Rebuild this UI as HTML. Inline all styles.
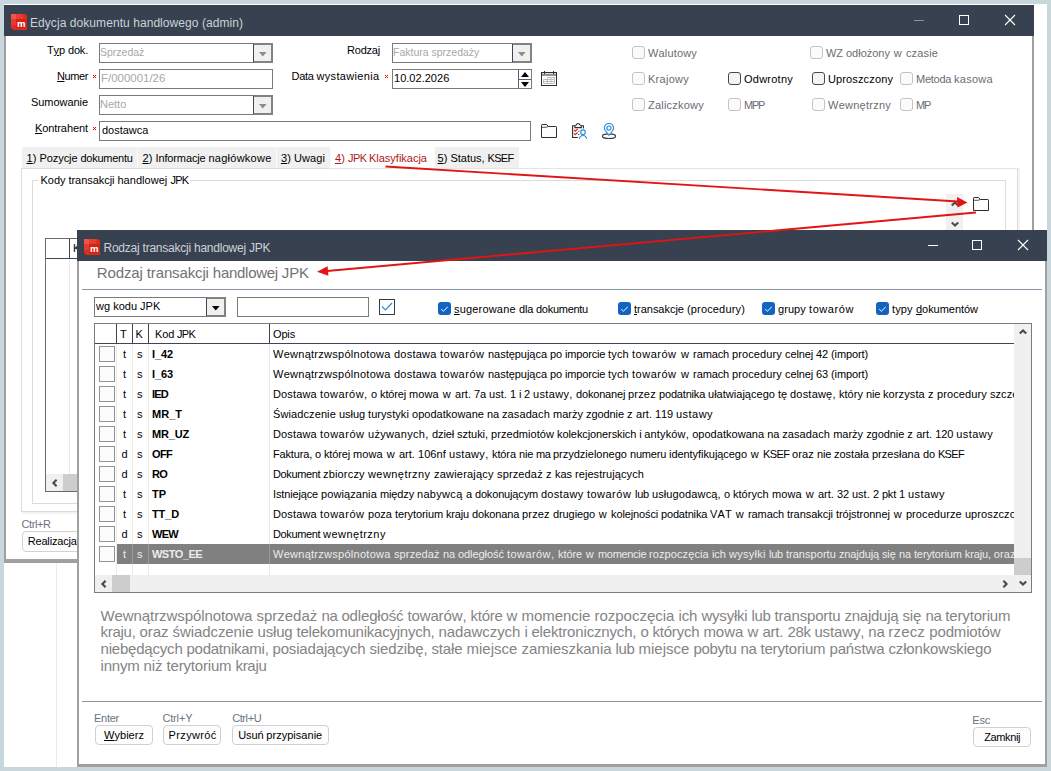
<!DOCTYPE html>
<html lang="pl"><head><meta charset="utf-8"><title>Rodzaj transakcji handlowej JPK</title>
<style>
html,body{margin:0;padding:0;}
body{width:1051px;height:771px;overflow:hidden;background:#c8d7dc;position:relative;font-family:"Liberation Sans",sans-serif;}
div{position:absolute;}
.t{position:absolute;white-space:pre;line-height:1;font-kerning:none;font-variant-ligatures:none;}
.thin{}
u{text-decoration:underline;text-underline-offset:1px;}
</style></head><body>
<div style="left:4px;top:4px;width:1043px;height:763px;background:#fff;"></div>
<div style="left:56px;top:563px;width:1px;height:204px;background:#ecebe4;"></div>
<div style="left:4px;top:36px;width:1030px;height:527px;background:#fff;box-sizing:border-box;border-left:2px solid #a0a0a0;border-right:2px solid #a0a0a0;border-bottom:4px solid #a0a0a0;"></div>
<div style="left:4px;top:5px;width:1030px;height:31px;background:#37414f;"></div>
<svg width="16" height="16" viewBox="0 0 16 16" style="position:absolute;left:11px;top:14px"><path d="M0 0H14L16 2V16H2.5L0 13.5Z" fill="#df2a1b"/><path d="M0 0H5V5H0Z" fill="#f1534a"/><path d="M5 0H12V5H5Z" fill="#e63d30"/><path d="M12 0H14L16 2V5H12Z" fill="#de2c1e"/><path d="M0 5H5V11H0Z" fill="#e53c30"/><path d="M0 11H5V16H2.5L0 13.5Z" fill="#de2c1e"/><rect x="5" y="5" width="11" height="9.5" fill="#d32315"/><text x="6.1" y="13" font-family="Liberation Sans, sans-serif" font-weight="bold" font-size="9.6" fill="#fff">m</text></svg>
<span id="t1" class="t " style="top:16.5px;font-size:12px;color:#ccd2d9;left:30px;letter-spacing:0.065px;">Edycja dokumentu handlowego (admin)</span>
<div style="left:914px;top:20px;width:10px;height:1px;background:#8d949e;"></div>
<div style="left:959px;top:15px;width:10px;height:10px;box-sizing:border-box;border:1px solid #fff;"></div>
<svg width="12" height="12" viewBox="0 0 12 12" style="position:absolute;left:1004px;top:14px"><path d="M1 1L11 11M11 1L1 11" stroke="#fff" stroke-width="1.1" fill="none"/></svg>
<span class="t " style="top:45.25px;font-size:11px;color:#000;right:963px;"><span style="letter-spacing:-.1px">T<u>y</u>p </span><span style="letter-spacing:-.2px">dok.</span></span>
<span class="t " style="top:71.25px;font-size:11px;color:#000;right:963px;"><span style="letter-spacing:-.4px"><u>N</u>umer</span></span>
<span class="t " style="top:97.25px;font-size:11px;color:#000;right:963px;"><span style="letter-spacing:-.05px">Sumowanie</span></span>
<span class="t " style="top:123.25px;font-size:11px;color:#000;right:963px;"><span style="letter-spacing:-.08px"><u>K</u>ontrahent</span></span>
<span class="t " style="top:45.25px;font-size:11px;color:#000;right:671px;"><span style="letter-spacing:-.21px">Rodzaj</span></span>
<span class="t " style="top:71.25px;font-size:11px;color:#000;right:671.5px;"><span style="letter-spacing:-.26px">Data </span><span style="letter-spacing:.34px">wystawienia</span></span>
<svg width="3" height="3" viewBox="0 0 3 3" shape-rendering="crispEdges" style="position:absolute;left:93px;top:75px"><path d="M0 0h1v1h-1zM2 0h1v1h-1zM1 1h1v1h-1zM0 2h1v1h-1zM2 2h1v1h-1z" fill="#f00"/></svg>
<svg width="3" height="3" viewBox="0 0 3 3" shape-rendering="crispEdges" style="position:absolute;left:93px;top:127px"><path d="M0 0h1v1h-1zM2 0h1v1h-1zM1 1h1v1h-1zM0 2h1v1h-1zM2 2h1v1h-1z" fill="#f00"/></svg>
<svg width="3" height="3" viewBox="0 0 3 3" shape-rendering="crispEdges" style="position:absolute;left:385px;top:75px"><path d="M0 0h1v1h-1zM2 0h1v1h-1zM1 1h1v1h-1zM0 2h1v1h-1zM2 2h1v1h-1z" fill="#f00"/></svg>
<div style="left:99px;top:43px;width:174px;height:20px;box-sizing:border-box;border:1px solid #7a7a7a;background:#fff;"></div>
<div style="left:253px;top:43px;width:20px;height:20px;box-sizing:border-box;border:2px solid #828282;border-left:1px solid #3c4656;background:#f0f0f0;"></div>
<svg width="8" height="5" viewBox="0 0 8 5" style="position:absolute;left:258.7px;top:51.8px"><path d="M0 0H7.6L3.8 4.4Z" fill="#8c8c8c"/></svg>
<span id="t8" class="t thin" style="top:47.25px;font-size:11.4px;color:#a8a8a8;left:100.4px;transform:scaleX(0.9205);transform-origin:0 0;">Sprzedaż</span>
<div style="left:99px;top:69px;width:174px;height:20px;box-sizing:border-box;border:1px solid #7a7a7a;background:#fff;"></div>
<span id="t9" class="t thin" style="top:73.25px;font-size:11.4px;color:#a8a8a8;left:101.4px;transform:scaleX(1.0052);transform-origin:0 0;">F/000001/26</span>
<div style="left:99px;top:95px;width:174px;height:20px;box-sizing:border-box;border:1px solid #7a7a7a;background:#fff;"></div>
<div style="left:253px;top:95px;width:20px;height:20px;box-sizing:border-box;border:2px solid #828282;border-left:1px solid #3c4656;background:#f0f0f0;"></div>
<svg width="8" height="5" viewBox="0 0 8 5" style="position:absolute;left:258.7px;top:103.8px"><path d="M0 0H7.6L3.8 4.4Z" fill="#8c8c8c"/></svg>
<span id="t10" class="t thin" style="top:99.25px;font-size:11.4px;color:#a8a8a8;left:100.4px;transform:scaleX(0.9657);transform-origin:0 0;">Netto</span>
<div style="left:99px;top:121px;width:432px;height:20px;box-sizing:border-box;border:1px solid #7a7a7a;background:#fff;"></div>
<span id="t11" class="t thin" style="top:125.25px;font-size:11.4px;color:#000;left:102.3px;transform:scaleX(0.9621);transform-origin:0 0;">dostawca</span>
<div style="left:392px;top:43px;width:140px;height:20px;box-sizing:border-box;border:1px solid #7a7a7a;background:#fff;"></div>
<div style="left:512px;top:43px;width:20px;height:20px;box-sizing:border-box;border:2px solid #828282;border-left:1px solid #3c4656;background:#f0f0f0;"></div>
<svg width="8" height="5" viewBox="0 0 8 5" style="position:absolute;left:517.7px;top:51.8px"><path d="M0 0H7.6L3.8 4.4Z" fill="#8c8c8c"/></svg>
<span id="t12" class="t thin" style="top:47.25px;font-size:11.4px;color:#a8a8a8;left:393.4px;transform:scaleX(0.921);transform-origin:0 0;">Faktura sprzedaży</span>
<div style="left:392px;top:69px;width:140px;height:20px;box-sizing:border-box;border:1px solid #7a7a7a;background:#fff;"></div>
<span id="t13" class="t thin" style="top:73.25px;font-size:11.4px;color:#000;left:394.2px;transform:scaleX(0.9699);transform-origin:0 0;">10.02.2026</span>
<div style="left:518px;top:70px;width:13px;height:18px;box-sizing:border-box;background:#fff;border-left:1px solid #555f70;"></div>
<div style="left:518px;top:79px;width:13px;height:1px;background:#555f70;"></div>
<svg width="8" height="5" viewBox="0 0 8 5" style="position:absolute;left:521px;top:72px"><path d="M0 5H8L4 0Z" fill="#000"/></svg>
<svg width="8" height="5" viewBox="0 0 8 5" style="position:absolute;left:521px;top:82px"><path d="M0 0H8L4 5Z" fill="#000"/></svg>
<svg width="17" height="16" viewBox="0 0 17 16" style="position:absolute;left:541px;top:71px"><rect x="0.5" y="1.5" width="15" height="13" fill="#fff" stroke="#2e2e2e" stroke-width="1"/><rect x="1" y="2" width="14" height="1.5" fill="#dedad2"/><path d="M1 4H15" stroke="#2e2e2e" stroke-width="1"/><path d="M3.5 0V3M12.5 0V3" stroke="#2e2e2e" stroke-width="1"/><path d="M2.5 8.5H13.5M2.5 10.5H13.5M2.5 12.5H13.5M2.5 8.5V12.5M6.5 6.5V12.5M10 6.5V12.5M13.5 6.5V12.5M6.5 6.5H13.5" stroke="#bcbcbc" stroke-width="1" fill="none"/></svg>
<svg width="16" height="14" viewBox="0 0 16 14" style="position:absolute;left:541px;top:124px"><path d="M0.5 13.5V1.2Q0.5 0.5 1.2 0.5H5.6L7.2 2.5H14.8Q15.5 2.5 15.5 3.2V13.5Z" fill="#fdfdfd" stroke="#2d2d2d" stroke-width="1" stroke-linejoin="round"/><path d="M0.5 3.3H5.2L7.2 2.5" fill="none" stroke="#2d2d2d" stroke-width="0.8"/></svg>
<svg width="16" height="17" viewBox="0 0 16 17" style="position:absolute;left:572px;top:123px"><path d="M5.8 14.5H0.6V2.7H11.4V5.6" fill="#fff" stroke="#2e2e2e" stroke-width="1.1"/><path d="M2.9 2.7V4.6H9.3V2.7M3.6 2.7Q6.1 -1.6 8.6 2.7" fill="#fff" stroke="#2e2e2e" stroke-width="1.1"/><path d="M2.1 6.9L3.3 8.2L5.6 6M2.1 10.4L3.3 11.7L5.6 9.5" fill="none" stroke="#e62626" stroke-width="1.25"/><path d="M6.2 8.3h1.1M6.2 11.5h1.1" stroke="#2e2e2e" stroke-width="1.1"/><circle cx="11" cy="9.2" r="2.3" fill="#fff" stroke="#2a8fd8" stroke-width="1.15"/><path d="M7.2 15.9Q8 12.5 11 12.5Q14 12.5 14.8 15.9" fill="none" stroke="#2a8fd8" stroke-width="1.15"/></svg>
<svg width="16" height="17" viewBox="0 0 16 17" style="position:absolute;left:601px;top:123px"><ellipse cx="8" cy="13.2" rx="6.6" ry="2.3" fill="none" stroke="#3c3c3c" stroke-width="1.15"/><path d="M8 12.4L4.3 7.5Q3.1 5.7 3.5 4.2Q4.4 0.5 8 0.5Q11.6 0.5 12.5 4.2Q12.9 5.7 11.7 7.5Z" fill="#fff" stroke="#2a8fd8" stroke-width="1.15"/><circle cx="8" cy="5.1" r="2.1" fill="#fff" stroke="#2a8fd8" stroke-width="1.2"/></svg>
<div style="left:632px;top:46px;width:13px;height:13px;box-sizing:border-box;border:1px solid #c4c4c4;border-radius:3px;background:#fbfbfb;"></div>
<span class="t " style="top:48.0px;font-size:11px;color:#6c6c72;left:648px;"><span style="letter-spacing:.16px">Walutowy</span></span>
<div style="left:632px;top:72px;width:13px;height:13px;box-sizing:border-box;border:1px solid #c4c4c4;border-radius:3px;background:#fbfbfb;"></div>
<span class="t " style="top:74.0px;font-size:11px;color:#6c6c72;left:648px;"><span style="letter-spacing:.27px">Krajowy</span></span>
<div style="left:632px;top:98px;width:13px;height:13px;box-sizing:border-box;border:1px solid #c4c4c4;border-radius:3px;background:#fbfbfb;"></div>
<span class="t " style="top:100.0px;font-size:11px;color:#6c6c72;left:648px;"><span style="letter-spacing:.22px">Zaliczkowy</span></span>
<div style="left:728px;top:72px;width:13px;height:13px;box-sizing:border-box;border:1px solid #484848;border-radius:3px;background:#f4f4f4;"></div>
<span class="t " style="top:74.0px;font-size:11px;color:#000;left:744px;"><span style="letter-spacing:.24px">Odwrotny</span></span>
<div style="left:728px;top:98px;width:13px;height:13px;box-sizing:border-box;border:1px solid #c4c4c4;border-radius:3px;background:#fbfbfb;"></div>
<span class="t " style="top:100.0px;font-size:11px;color:#6c6c72;left:744px;"><span style="letter-spacing:-1.28px">MPP</span></span>
<div style="left:810px;top:46px;width:13px;height:13px;box-sizing:border-box;border:1px solid #c4c4c4;border-radius:3px;background:#fbfbfb;"></div>
<span class="t " style="top:48.0px;font-size:11px;color:#6c6c72;left:826px;"><span style="letter-spacing:-.06px">WZ </span><span style="letter-spacing:-.01px">odłożony </span><span style="letter-spacing:.6px;margin-left:0.8px">w </span><span style="letter-spacing:.14px">czasie</span></span>
<div style="left:812px;top:72px;width:13px;height:13px;box-sizing:border-box;border:1px solid #484848;border-radius:3px;background:#f4f4f4;"></div>
<span class="t " style="top:74.0px;font-size:11px;color:#000;left:828px;"><span style="letter-spacing:.13px">Uproszczony</span></span>
<div style="left:812px;top:98px;width:13px;height:13px;box-sizing:border-box;border:1px solid #c4c4c4;border-radius:3px;background:#fbfbfb;"></div>
<span class="t " style="top:100.0px;font-size:11px;color:#6c6c72;left:828px;"><span style="letter-spacing:.25px">Wewnętrzny</span></span>
<div style="left:900px;top:72px;width:13px;height:13px;box-sizing:border-box;border:1px solid #c4c4c4;border-radius:3px;background:#fbfbfb;"></div>
<span class="t " style="top:74.0px;font-size:11px;color:#6c6c72;left:916px;"><span style="letter-spacing:-.25px">Metoda </span><span style="letter-spacing:.28px">kasowa</span></span>
<div style="left:900px;top:98px;width:13px;height:13px;box-sizing:border-box;border:1px solid #c4c4c4;border-radius:3px;background:#fbfbfb;"></div>
<span class="t " style="top:100.0px;font-size:11px;color:#6c6c72;left:916px;"><span style="letter-spacing:-1.25px">MP</span></span>
<div style="left:22px;top:147px;width:497px;height:21px;background:#f0f0f0;"></div>
<div style="left:330px;top:147px;width:104px;height:22px;background:#fff;"></div>
<div style="left:137px;top:148px;width:1px;height:20px;background:#fcfcfc;"></div>
<div style="left:276px;top:148px;width:1px;height:20px;background:#fcfcfc;"></div>
<div style="left:330px;top:148px;width:1px;height:20px;background:#fcfcfc;"></div>
<div style="left:434px;top:148px;width:1px;height:20px;background:#fcfcfc;"></div>
<span class="t " style="top:152.75px;font-size:11px;color:#000;left:26.5px;"><span style="letter-spacing:.05px"><u>1</u>) </span><span style="letter-spacing:-.07px">Pozycje </span><span style="letter-spacing:-.27px">dokumentu</span></span>
<span class="t " style="top:152.75px;font-size:11px;color:#000;left:142.5px;"><span style="letter-spacing:.05px"><u>2</u>) </span><span style="letter-spacing:-.13px">Informacje </span><span style="letter-spacing:.25px">nagłówkowe</span></span>
<span class="t " style="top:152.75px;font-size:11px;color:#000;left:281px;"><span style="letter-spacing:.05px"><u>3</u>) </span><span style="letter-spacing:.08px">Uwagi</span></span>
<span class="t " style="top:152.75px;font-size:11px;color:#b01818;left:335px;"><span style="letter-spacing:.05px"><u>4</u>) </span><span style="letter-spacing:-.56px">JPK </span><span style="letter-spacing:-.01px">Klasyfikacja</span></span>
<span class="t " style="top:152.75px;font-size:11px;color:#000;left:437.5px;"><span style="letter-spacing:.05px"><u>5</u>) </span><span style="letter-spacing:-.04px">Status, </span><span style="letter-spacing:-.68px">KSEF</span></span>
<div style="left:21px;top:168px;width:997px;height:344px;box-sizing:border-box;border:1px solid #dcdcdc;border-top-color:#e4e4e4;"></div>
<div style="left:22px;top:512px;width:998px;height:2px;background:#f3f3f3;"></div>
<div style="left:22px;top:168px;width:308px;height:1px;background:#dcdcdc;"></div>
<div style="left:1018px;top:168px;width:2px;height:345px;background:#f3f3f3;"></div>
<div style="left:32px;top:180px;width:974px;height:324px;box-sizing:border-box;border:1px solid #dcdcdc;"></div>
<div style="left:38px;top:176px;width:152px;height:10px;background:#fff;"></div>
<span class="t " style="top:174.75px;font-size:11px;color:#000;left:40.5px;"><span style="letter-spacing:-.03px">Kody </span><span style="letter-spacing:-.05px">transakcji </span><span style="letter-spacing:.04px">handlowej </span><span style="letter-spacing:-.73px">JPK</span></span>
<div style="left:45px;top:238px;width:600px;height:254px;box-sizing:border-box;border:1px solid #6a6a6a;background:#fff;"></div>
<div style="left:46px;top:258px;width:598px;height:1px;background:#3c4656;"></div>
<div style="left:69px;top:239px;width:1px;height:19px;background:#3c4656;"></div>
<div style="left:69px;top:259px;width:1px;height:215px;background:#ecebe4;"></div>
<span class="t " style="top:242.75px;font-size:11px;color:#000;left:73px;"><span style="letter-spacing:-.19px">Kod</span></span>
<div style="left:46px;top:474px;width:598px;height:17px;background:#f0f0f0;"></div>
<div style="left:63px;top:474px;width:30px;height:17px;background:#cdcdcd;"></div>
<svg width="7" height="8" viewBox="0 0 7 8" style="position:absolute;left:50.5px;top:478.5px"><path d="M5.6 0.8L2.4 4L5.6 7.2" fill="none" stroke="#4a4a4a" stroke-width="2.1"/></svg>
<div style="left:946px;top:194px;width:17px;height:40px;background:#f0f0f0;"></div>
<svg width="8" height="7" viewBox="0 0 8 7" style="position:absolute;left:950.5px;top:199.5px"><path d="M0.8 5.6L4 2.4L7.2 5.6" fill="none" stroke="#4a4a4a" stroke-width="2.1"/></svg>
<svg width="8" height="7" viewBox="0 0 8 7" style="position:absolute;left:950.5px;top:220.5px"><path d="M0.8 1.4L4 4.6L7.2 1.4" fill="none" stroke="#4a4a4a" stroke-width="2.1"/></svg>
<svg width="16" height="14" viewBox="0 0 16 14" style="position:absolute;left:973px;top:197px"><path d="M0.5 13.5V1.2Q0.5 0.5 1.2 0.5H5.6L7.2 2.5H14.8Q15.5 2.5 15.5 3.2V13.5Z" fill="#fdfdfd" stroke="#2d2d2d" stroke-width="1" stroke-linejoin="round"/><path d="M0.5 3.3H5.2L7.2 2.5" fill="none" stroke="#2d2d2d" stroke-width="0.8"/></svg>
<span class="t " style="top:518.5px;font-size:11px;color:#6a7480;left:21.5px;"><span style="letter-spacing:-.41px">Ctrl+R</span></span>
<div style="left:22px;top:531px;width:80px;height:21px;box-sizing:border-box;border:1px solid #d2d2d2;border-radius:4px;background:#fdfdfd;"></div>
<span class="t " style="top:536.25px;font-size:11px;color:#000;left:27.7px;"><span style="letter-spacing:-.17px">Realizacja</span></span>
<div style="left:77px;top:260px;width:970px;height:507px;background:#fff;box-sizing:border-box;border-left:2px solid #a0a0a0;border-right:2px solid #a0a0a0;border-bottom:3px solid #a0a0a0;"></div>
<div style="left:77px;top:230px;width:970px;height:31px;background:#37414f;"></div>
<svg width="16" height="16" viewBox="0 0 16 16" style="position:absolute;left:84px;top:239px"><path d="M0 0H14L16 2V16H2.5L0 13.5Z" fill="#df2a1b"/><path d="M0 0H5V5H0Z" fill="#f1534a"/><path d="M5 0H12V5H5Z" fill="#e63d30"/><path d="M12 0H14L16 2V5H12Z" fill="#de2c1e"/><path d="M0 5H5V11H0Z" fill="#e53c30"/><path d="M0 11H5V16H2.5L0 13.5Z" fill="#de2c1e"/><rect x="5" y="5" width="11" height="9.5" fill="#d32315"/><text x="6.1" y="13" font-family="Liberation Sans, sans-serif" font-weight="bold" font-size="9.6" fill="#fff">m</text></svg>
<span id="t33" class="t " style="top:241.5px;font-size:12px;color:#ccd2d9;left:103.5px;letter-spacing:-0.236px;">Rodzaj transakcji handlowej JPK</span>
<div style="left:927.5px;top:245px;width:10px;height:1px;background:#fff;"></div>
<div style="left:972px;top:240px;width:10px;height:10px;box-sizing:border-box;border:1px solid #fff;"></div>
<svg width="12" height="12" viewBox="0 0 12 12" style="position:absolute;left:1017px;top:239px"><path d="M1 1L11 11M11 1L1 11" stroke="#fff" stroke-width="1.1" fill="none"/></svg>
<span class="t " style="top:265.25px;font-size:15px;color:#727272;left:96.8px;"><span style="letter-spacing:-.12px">Rodzaj </span><span style="letter-spacing:-.14px">transakcji </span><span style="letter-spacing:-.27px">handlowej </span><span style="letter-spacing:-.17px">JPK</span></span>
<div style="left:82px;top:289px;width:960px;height:1px;background:#8a94a2;"></div>
<div style="left:94px;top:297px;width:132px;height:20px;box-sizing:border-box;border:1px solid #7a7a7a;background:#fff;"></div>
<div style="left:206px;top:297px;width:20px;height:20px;box-sizing:border-box;border:2px solid #828282;border-left:1px solid #3c4656;background:#f0f0f0;"></div>
<svg width="8" height="5" viewBox="0 0 8 5" style="position:absolute;left:211.7px;top:305.8px"><path d="M0 0H7.6L3.8 4.4Z" fill="#000"/></svg>
<span id="t35" class="t thin" style="top:301.25px;font-size:11.4px;color:#000;left:96.3px;transform:scaleX(0.9671);transform-origin:0 0;">wg kodu JPK</span>
<div style="left:237px;top:297px;width:132px;height:20px;box-sizing:border-box;border:1px solid #7a7a7a;background:#fff;"></div>
<div style="left:379px;top:299px;width:16px;height:16px;box-sizing:border-box;border:1px solid #3a3a3a;background:#fff;"></div>
<svg width="12" height="10" viewBox="0 0 12 10" style="position:absolute;left:381px;top:302px"><path d="M1 4.5L4.5 8L11 1" fill="none" stroke="#2a8fd8" stroke-width="1.2"/></svg>
<div style="left:438px;top:302px;width:13px;height:13px;box-sizing:border-box;border-radius:3px;background:#1264c0;"></div>
<svg width="9" height="7" viewBox="0 0 9 7" style="position:absolute;left:440px;top:305.5px"><path d="M1.2 3.1L3.4 5.2L7.8 0.9" fill="none" stroke="#fff" stroke-width="1"/></svg>
<span class="t " style="top:304.0px;font-size:11px;color:#000;left:454px;"><span style="letter-spacing:.18px"><u>s</u>ugerowane </span><span style="letter-spacing:-.19px">dla </span><span style="letter-spacing:-.27px">dokumentu</span></span>
<div style="left:618px;top:302px;width:13px;height:13px;box-sizing:border-box;border-radius:3px;background:#1264c0;"></div>
<svg width="9" height="7" viewBox="0 0 9 7" style="position:absolute;left:620px;top:305.5px"><path d="M1.2 3.1L3.4 5.2L7.8 0.9" fill="none" stroke="#fff" stroke-width="1"/></svg>
<span class="t " style="top:304.0px;font-size:11px;color:#000;left:634px;"><span style="letter-spacing:-.02px"><u>t</u>ransakcje </span><span style="letter-spacing:.16px">(procedury)</span></span>
<div style="left:762px;top:302px;width:13px;height:13px;box-sizing:border-box;border-radius:3px;background:#1264c0;"></div>
<svg width="9" height="7" viewBox="0 0 9 7" style="position:absolute;left:764px;top:305.5px"><path d="M1.2 3.1L3.4 5.2L7.8 0.9" fill="none" stroke="#fff" stroke-width="1"/></svg>
<span class="t " style="top:304.0px;font-size:11px;color:#000;left:778px;"><span style="letter-spacing:.07px"><u>g</u>rupy </span><span style="letter-spacing:.58px">towarów</span></span>
<div style="left:876px;top:302px;width:13px;height:13px;box-sizing:border-box;border-radius:3px;background:#1264c0;"></div>
<svg width="9" height="7" viewBox="0 0 9 7" style="position:absolute;left:878px;top:305.5px"><path d="M1.2 3.1L3.4 5.2L7.8 0.9" fill="none" stroke="#fff" stroke-width="1"/></svg>
<span class="t " style="top:304.0px;font-size:11px;color:#000;left:892px;"><span style="letter-spacing:.15px">typy </span><span style="letter-spacing:-.04px"><u>d</u>okumentów</span></span>
<div style="left:94px;top:323px;width:938px;height:270px;box-sizing:border-box;border:1px solid #7c7c7c;background:#fff;"></div>
<div style="left:95px;top:343px;width:919px;height:1px;background:#3c4656;"></div>
<div style="left:116px;top:324px;width:1px;height:19px;background:#3c4656;"></div>
<div style="left:116px;top:344px;width:1px;height:231px;background:#ecebe4;"></div>
<div style="left:132px;top:324px;width:1px;height:19px;background:#3c4656;"></div>
<div style="left:132px;top:344px;width:1px;height:231px;background:#ecebe4;"></div>
<div style="left:148px;top:324px;width:1px;height:19px;background:#3c4656;"></div>
<div style="left:148px;top:344px;width:1px;height:231px;background:#ecebe4;"></div>
<div style="left:269px;top:324px;width:1px;height:19px;background:#3c4656;"></div>
<div style="left:269px;top:344px;width:1px;height:231px;background:#ecebe4;"></div>
<span class="t " style="top:328.75px;font-size:11px;color:#000;left:120px;"><span style="letter-spacing:-.73px">T</span></span>
<span class="t " style="top:328.75px;font-size:11px;color:#000;left:135.5px;"><span style="letter-spacing:-.34px">K</span></span>
<span class="t " style="top:328.75px;font-size:11px;color:#000;left:155px;"><span style="letter-spacing:-.16px">Kod </span><span style="letter-spacing:-.73px">JPK</span></span>
<span class="t " style="top:328.75px;font-size:11px;color:#000;left:273px;"><span style="letter-spacing:-.16px">Opis</span></span>
<div style="left:95px;top:344px;width:919px;height:231px;overflow:hidden;">
<div style="left:4px;top:2px;width:16px;height:16px;box-sizing:border-box;border:1px solid #929292;background:#fcfcfc;"></div>
<span class="t" style="left:28px;top:5.25px;font-size:11px;color:#000;"><span style="letter-spacing:-.06px">t</span></span>
<span class="t" style="left:42px;top:5.25px;font-size:11px;color:#000;"><span style="letter-spacing:.5px">s</span></span>
<span class="t" style="left:57px;top:5.25px;font-size:11px;color:#000;font-weight:bold;"><span style="letter-spacing:-.11px">I_42</span></span>
<span class="t" style="left:178px;top:5.25px;font-size:11px;color:#000;"><span style="letter-spacing:.27px">Wewnątrzwspólnotowa </span><span style="letter-spacing:.25px">dostawa </span><span style="letter-spacing:.5px">towarów </span><span style="letter-spacing:-.03px">następująca </span><span style="letter-spacing:-.1px">po </span><span style="letter-spacing:-.18px">imporcie </span><span style="letter-spacing:.15px">tych </span><span style="letter-spacing:.5px">towarów </span><span style="letter-spacing:.6px;margin-left:0.8px">w </span><span style="letter-spacing:-.11px">ramach </span><span style="letter-spacing:.1px">procedury </span><span style="letter-spacing:-.11px">celnej </span><span style="letter-spacing:-.1px">42 </span><span style="letter-spacing:-.11px">(import)</span></span>
<div style="left:4px;top:22px;width:16px;height:16px;box-sizing:border-box;border:1px solid #929292;background:#fcfcfc;"></div>
<span class="t" style="left:28px;top:25.25px;font-size:11px;color:#000;"><span style="letter-spacing:-.06px">t</span></span>
<span class="t" style="left:42px;top:25.25px;font-size:11px;color:#000;"><span style="letter-spacing:.5px">s</span></span>
<span class="t" style="left:57px;top:25.25px;font-size:11px;color:#000;font-weight:bold;"><span style="letter-spacing:-.11px">I_63</span></span>
<span class="t" style="left:178px;top:25.25px;font-size:11px;color:#000;"><span style="letter-spacing:.27px">Wewnątrzwspólnotowa </span><span style="letter-spacing:.25px">dostawa </span><span style="letter-spacing:.5px">towarów </span><span style="letter-spacing:-.03px">następująca </span><span style="letter-spacing:-.1px">po </span><span style="letter-spacing:-.18px">imporcie </span><span style="letter-spacing:.15px">tych </span><span style="letter-spacing:.5px">towarów </span><span style="letter-spacing:.6px;margin-left:0.8px">w </span><span style="letter-spacing:-.11px">ramach </span><span style="letter-spacing:.1px">procedury </span><span style="letter-spacing:-.11px">celnej </span><span style="letter-spacing:-.1px">63 </span><span style="letter-spacing:-.11px">(import)</span></span>
<div style="left:4px;top:42px;width:16px;height:16px;box-sizing:border-box;border:1px solid #929292;background:#fcfcfc;"></div>
<span class="t" style="left:28px;top:45.25px;font-size:11px;color:#000;"><span style="letter-spacing:-.06px">t</span></span>
<span class="t" style="left:42px;top:45.25px;font-size:11px;color:#000;"><span style="letter-spacing:.5px">s</span></span>
<span class="t" style="left:57px;top:45.25px;font-size:11px;color:#000;font-weight:bold;"><span style="letter-spacing:-.78px">IED</span></span>
<span class="t" style="left:178px;top:45.25px;font-size:11px;color:#000;"><span style="letter-spacing:.14px">Dostawa </span><span style="letter-spacing:.44px">towarów, </span><span style="letter-spacing:-.09px">o </span><span style="letter-spacing:-.14px">której </span><span style="letter-spacing:.12px">mowa </span><span style="letter-spacing:.6px;margin-left:0.8px">w </span><span style="letter-spacing:.01px">art. </span><span style="letter-spacing:-.1px">7a </span><span style="letter-spacing:.04px">ust. </span><span style="letter-spacing:-.09px">1 </span><span style="letter-spacing:-.25px">i </span><span style="letter-spacing:-.09px">2 </span><span style="letter-spacing:.33px">ustawy, </span><span style="letter-spacing:-.18px">dokonanej </span><span style="letter-spacing:.17px">przez </span><span style="letter-spacing:-.18px">podatnika </span><span style="letter-spacing:.02px">ułatwiającego </span><span style="letter-spacing:-.08px">tę </span><span style="letter-spacing:.21px">dostawę, </span><span style="letter-spacing:.02px">który </span><span style="letter-spacing:-.19px">nie </span><span style="letter-spacing:.11px">korzysta </span><span style="letter-spacing:.22px">z </span><span style="letter-spacing:.1px">procedury </span><span style="letter-spacing:.05px">szczególnej</span></span>
<div style="left:4px;top:62px;width:16px;height:16px;box-sizing:border-box;border:1px solid #929292;background:#fcfcfc;"></div>
<span class="t" style="left:28px;top:65.25px;font-size:11px;color:#000;"><span style="letter-spacing:-.06px">t</span></span>
<span class="t" style="left:42px;top:65.25px;font-size:11px;color:#000;"><span style="letter-spacing:.5px">s</span></span>
<span class="t" style="left:57px;top:65.25px;font-size:11px;color:#000;font-weight:bold;"><span style="letter-spacing:.01px">MR_T</span></span>
<span class="t" style="left:178px;top:65.25px;font-size:11px;color:#000;"><span style="letter-spacing:.1px">Świadczenie </span><span style="letter-spacing:-.06px">usług </span><span style="letter-spacing:.06px">turystyki </span><span style="letter-spacing:.03px">opodatkowane </span><span style="letter-spacing:-.1px">na </span><span style="letter-spacing:.09px">zasadach </span><span style="letter-spacing:0px">marży </span><span style="letter-spacing:-.07px">zgodnie </span><span style="letter-spacing:.22px">z </span><span style="letter-spacing:.01px">art. </span><span style="letter-spacing:-.11px">119 </span><span style="letter-spacing:.46px">ustawy</span></span>
<div style="left:4px;top:82px;width:16px;height:16px;box-sizing:border-box;border:1px solid #929292;background:#fcfcfc;"></div>
<span class="t" style="left:28px;top:85.25px;font-size:11px;color:#000;"><span style="letter-spacing:-.06px">t</span></span>
<span class="t" style="left:42px;top:85.25px;font-size:11px;color:#000;"><span style="letter-spacing:.5px">s</span></span>
<span class="t" style="left:57px;top:85.25px;font-size:11px;color:#000;font-weight:bold;"><span style="letter-spacing:-.18px">MR_UZ</span></span>
<span class="t" style="left:178px;top:85.25px;font-size:11px;color:#000;"><span style="letter-spacing:.14px">Dostawa </span><span style="letter-spacing:.5px">towarów </span><span style="letter-spacing:.32px">używanych, </span><span style="letter-spacing:-.11px">dzieł </span><span style="letter-spacing:-.03px">sztuki, </span><span style="letter-spacing:.05px">przedmiotów </span><span style="letter-spacing:-.1px">kolekcjonerskich </span><span style="letter-spacing:-.25px">i </span><span style="letter-spacing:.17px">antyków, </span><span style="letter-spacing:.03px">opodatkowana </span><span style="letter-spacing:-.1px">na </span><span style="letter-spacing:.09px">zasadach </span><span style="letter-spacing:0px">marży </span><span style="letter-spacing:-.07px">zgodnie </span><span style="letter-spacing:.22px">z </span><span style="letter-spacing:.01px">art. </span><span style="letter-spacing:-.11px">120 </span><span style="letter-spacing:.46px">ustawy</span></span>
<div style="left:4px;top:102px;width:16px;height:16px;box-sizing:border-box;border:1px solid #929292;background:#fcfcfc;"></div>
<span class="t" style="left:26.5px;top:105.25px;font-size:11px;color:#000;"><span style="letter-spacing:-.12px">d</span></span>
<span class="t" style="left:42px;top:105.25px;font-size:11px;color:#000;"><span style="letter-spacing:.5px">s</span></span>
<span class="t" style="left:57px;top:105.25px;font-size:11px;color:#000;font-weight:bold;"><span style="letter-spacing:-.67px">OFF</span></span>
<span class="t" style="left:178px;top:105.25px;font-size:11px;color:#000;"><span style="letter-spacing:-.16px">Faktura, </span><span style="letter-spacing:-.09px">o </span><span style="letter-spacing:-.14px">której </span><span style="letter-spacing:.12px">mowa </span><span style="letter-spacing:.6px;margin-left:0.8px">w </span><span style="letter-spacing:.01px">art. </span><span style="letter-spacing:.07px">106nf </span><span style="letter-spacing:.33px">ustawy, </span><span style="letter-spacing:-.09px">która </span><span style="letter-spacing:-.19px">nie </span><span style="letter-spacing:-.45px">ma </span><span style="letter-spacing:0px">przydzielonego </span><span style="letter-spacing:-.19px">numeru </span><span style="letter-spacing:-.06px">identyfikującego </span><span style="letter-spacing:.6px;margin-left:0.8px">w </span><span style="letter-spacing:-.56px">KSEF </span><span style="letter-spacing:.11px">oraz </span><span style="letter-spacing:-.19px">nie </span><span style="letter-spacing:.01px">została </span><span style="letter-spacing:.02px">przesłana </span><span style="letter-spacing:-.1px">do </span><span style="letter-spacing:-.68px">KSEF</span></span>
<div style="left:4px;top:122px;width:16px;height:16px;box-sizing:border-box;border:1px solid #929292;background:#fcfcfc;"></div>
<span class="t" style="left:26.5px;top:125.25px;font-size:11px;color:#000;"><span style="letter-spacing:-.12px">d</span></span>
<span class="t" style="left:42px;top:125.25px;font-size:11px;color:#000;"><span style="letter-spacing:.5px">s</span></span>
<span class="t" style="left:57px;top:125.25px;font-size:11px;color:#000;font-weight:bold;"><span style="letter-spacing:-.75px">RO</span></span>
<span class="t" style="left:178px;top:125.25px;font-size:11px;color:#000;"><span style="letter-spacing:-.36px">Dokument </span><span style="letter-spacing:.18px">zbiorczy </span><span style="letter-spacing:.44px">wewnętrzny </span><span style="letter-spacing:.21px">zawierający </span><span style="letter-spacing:.14px">sprzedaż </span><span style="letter-spacing:.22px">z </span><span style="letter-spacing:-.05px">kas </span><span style="letter-spacing:.08px">rejestrujących</span></span>
<div style="left:4px;top:142px;width:16px;height:16px;box-sizing:border-box;border:1px solid #929292;background:#fcfcfc;"></div>
<span class="t" style="left:28px;top:145.25px;font-size:11px;color:#000;"><span style="letter-spacing:-.06px">t</span></span>
<span class="t" style="left:42px;top:145.25px;font-size:11px;color:#000;"><span style="letter-spacing:.5px">s</span></span>
<span class="t" style="left:57px;top:145.25px;font-size:11px;color:#000;font-weight:bold;"><span style="letter-spacing:-.03px">TP</span></span>
<span class="t" style="left:178px;top:145.25px;font-size:11px;color:#000;"><span style="letter-spacing:-.14px">Istniejące </span><span style="letter-spacing:.08px">powiązania </span><span style="letter-spacing:-.13px">między </span><span style="letter-spacing:.31px">nabywcą </span><span style="letter-spacing:-.09px">a </span><span style="letter-spacing:-.16px">dokonującym </span><span style="letter-spacing:.32px">dostawy </span><span style="letter-spacing:.5px">towarów </span><span style="letter-spacing:-.19px">lub </span><span style="letter-spacing:.13px">usługodawcą, </span><span style="letter-spacing:-.09px">o </span><span style="letter-spacing:.06px">których </span><span style="letter-spacing:.12px">mowa </span><span style="letter-spacing:.6px;margin-left:0.8px">w </span><span style="letter-spacing:.01px">art. </span><span style="letter-spacing:-.1px">32 </span><span style="letter-spacing:.04px">ust. </span><span style="letter-spacing:-.09px">2 </span><span style="letter-spacing:-.18px">pkt </span><span style="letter-spacing:-.09px">1 </span><span style="letter-spacing:.46px">ustawy</span></span>
<div style="left:4px;top:162px;width:16px;height:16px;box-sizing:border-box;border:1px solid #929292;background:#fcfcfc;"></div>
<span class="t" style="left:28px;top:165.25px;font-size:11px;color:#000;"><span style="letter-spacing:-.06px">t</span></span>
<span class="t" style="left:42px;top:165.25px;font-size:11px;color:#000;"><span style="letter-spacing:.5px">s</span></span>
<span class="t" style="left:57px;top:165.25px;font-size:11px;color:#000;font-weight:bold;"><span style="letter-spacing:-.12px">TT_D</span></span>
<span class="t" style="left:178px;top:165.25px;font-size:11px;color:#000;"><span style="letter-spacing:.14px">Dostawa </span><span style="letter-spacing:.5px">towarów </span><span style="letter-spacing:.02px">poza </span><span style="letter-spacing:-.09px">terytorium </span><span style="letter-spacing:-.15px">kraju </span><span style="letter-spacing:-.15px">dokonana </span><span style="letter-spacing:.17px">przez </span><span style="letter-spacing:-.1px">drugiego </span><span style="letter-spacing:.6px;margin-left:0.8px">w </span><span style="letter-spacing:-.12px">kolejności </span><span style="letter-spacing:-.18px">podatnika </span><span style="letter-spacing:.14px">VAT </span><span style="letter-spacing:.6px;margin-left:0.8px">w </span><span style="letter-spacing:-.11px">ramach </span><span style="letter-spacing:-.05px">transakcji </span><span style="letter-spacing:-.04px">trójstronnej </span><span style="letter-spacing:.6px;margin-left:0.8px">w </span><span style="letter-spacing:.08px">procedurze </span><span style="letter-spacing:.1px">uproszczonej</span></span>
<div style="left:4px;top:182px;width:16px;height:16px;box-sizing:border-box;border:1px solid #929292;background:#fcfcfc;"></div>
<span class="t" style="left:26.5px;top:185.25px;font-size:11px;color:#000;"><span style="letter-spacing:-.12px">d</span></span>
<span class="t" style="left:42px;top:185.25px;font-size:11px;color:#000;"><span style="letter-spacing:.5px">s</span></span>
<span class="t" style="left:57px;top:185.25px;font-size:11px;color:#000;font-weight:bold;"><span style="letter-spacing:-.7px">WEW</span></span>
<span class="t" style="left:178px;top:185.25px;font-size:11px;color:#000;"><span style="letter-spacing:-.36px">Dokument </span><span style="letter-spacing:.49px">wewnętrzny</span></span>
<div style="left:22px;top:200px;width:897px;height:20px;background:#808080;"></div>
<div style="left:37px;top:200px;width:1px;height:20px;background:#9a9a9a;"></div>
<div style="left:53px;top:200px;width:1px;height:20px;background:#9a9a9a;"></div>
<div style="left:174px;top:200px;width:1px;height:20px;background:#9a9a9a;"></div>
<div style="left:4px;top:202px;width:16px;height:16px;box-sizing:border-box;border:1px solid #929292;background:#fcfcfc;"></div>
<span class="t" style="left:28px;top:205.25px;font-size:11px;color:#ececec;"><span style="letter-spacing:-.06px">t</span></span>
<span class="t" style="left:42px;top:205.25px;font-size:11px;color:#ececec;"><span style="letter-spacing:.5px">s</span></span>
<span class="t" style="left:57px;top:205.25px;font-size:11px;color:#ececec;font-weight:bold;"><span style="letter-spacing:-.54px">WSTO_EE</span></span>
<span class="t" style="left:178px;top:205.25px;font-size:11px;color:#ececec;"><span style="letter-spacing:.27px">Wewnątrzwspólnotowa </span><span style="letter-spacing:.14px">sprzedaż </span><span style="letter-spacing:-.1px">na </span><span style="letter-spacing:-.05px">odległość </span><span style="letter-spacing:.44px">towarów, </span><span style="letter-spacing:-.09px">które </span><span style="letter-spacing:.6px;margin-left:0.8px">w </span><span style="letter-spacing:-.31px">momencie </span><span style="letter-spacing:.1px">rozpoczęcia </span><span style="letter-spacing:-.03px">ich </span><span style="letter-spacing:.26px">wysyłki </span><span style="letter-spacing:-.19px">lub </span><span style="letter-spacing:.04px">transportu </span><span style="letter-spacing:-.12px">znajdują </span><span style="letter-spacing:-.03px">się </span><span style="letter-spacing:-.1px">na </span><span style="letter-spacing:-.09px">terytorium </span><span style="letter-spacing:-.14px">kraju, </span><span style="letter-spacing:.11px">oraz </span><span style="letter-spacing:.17px">świadczenie </span><span style="letter-spacing:-.06px">usług</span></span>
</div>
<div style="left:1014px;top:324px;width:17px;height:268px;background:#f0f0f0;"></div>
<div style="left:1014px;top:558px;width:17px;height:17px;background:#cdcdcd;"></div>
<div style="left:95px;top:575px;width:919px;height:17px;background:#f0f0f0;"></div>
<div style="left:112px;top:575px;width:18px;height:17px;background:#cdcdcd;"></div>
<svg width="7" height="8" viewBox="0 0 7 8" style="position:absolute;left:99.5px;top:579.5px"><path d="M5.6 0.8L2.4 4L5.6 7.2" fill="none" stroke="#4a4a4a" stroke-width="2.1"/></svg>
<svg width="7" height="8" viewBox="0 0 7 8" style="position:absolute;left:1001.5px;top:579.5px"><path d="M1.4 0.8L4.6 4L1.4 7.2" fill="none" stroke="#4a4a4a" stroke-width="2.1"/></svg>
<svg width="8" height="7" viewBox="0 0 8 7" style="position:absolute;left:1018.5px;top:327.6px"><path d="M0.8 5.6L4 2.4L7.2 5.6" fill="none" stroke="#4a4a4a" stroke-width="2.1"/></svg>
<svg width="8" height="7" viewBox="0 0 8 7" style="position:absolute;left:1018.5px;top:579.8px"><path d="M0.8 1.4L4 4.6L7.2 1.4" fill="none" stroke="#4a4a4a" stroke-width="2.1"/></svg>
<span class="t " style="top:607.5px;font-size:15px;color:#848484;left:100.5px;"><span style="letter-spacing:-.08px">Wewnątrzwspólnotowa </span><span style="letter-spacing:-.01px">sprzedaż </span><span style="letter-spacing:-.29px">na </span><span style="letter-spacing:-.15px">odległość </span><span style="letter-spacing:-.13px">towarów, </span><span style="letter-spacing:-.25px">które </span><span style="letter-spacing:0px">w </span><span style="letter-spacing:-.04px">momencie </span><span style="letter-spacing:-.02px">rozpoczęcia </span><span style="letter-spacing:-.09px">ich </span><span style="letter-spacing:-.21px">wysyłki </span><span style="letter-spacing:-.3px">lub </span><span style="letter-spacing:-.16px">transportu </span><span style="letter-spacing:-.23px">znajdują </span><span style="letter-spacing:-.09px">się </span><span style="letter-spacing:-.29px">na </span><span style="letter-spacing:-.17px">terytorium</span></span>
<span class="t " style="top:624.25px;font-size:15px;color:#848484;left:100.5px;"><span style="letter-spacing:-.27px">kraju, </span><span style="letter-spacing:-.07px">oraz </span><span style="letter-spacing:-.07px">świadczenie </span><span style="letter-spacing:-.17px">usług </span><span style="letter-spacing:-.23px">telekomunikacyjnych, </span><span style="letter-spacing:-.07px">nadawczych </span><span style="letter-spacing:-.25px">i </span><span style="letter-spacing:-.16px">elektronicznych, </span><span style="letter-spacing:-.26px">o </span><span style="letter-spacing:-.19px">których </span><span style="letter-spacing:-.04px">mowa </span><span style="letter-spacing:0px">w </span><span style="letter-spacing:-.17px">art. </span><span style="letter-spacing:-.34px">28k </span><span style="letter-spacing:-.13px">ustawy, </span><span style="letter-spacing:-.29px">na </span><span style="letter-spacing:.16px">rzecz </span><span style="letter-spacing:-.17px">podmiotów</span></span>
<span class="t " style="top:641.25px;font-size:15px;color:#848484;left:100.5px;"><span style="letter-spacing:-.2px">niebędących </span><span style="letter-spacing:-.25px">podatnikami, </span><span style="letter-spacing:-.16px">posiadających </span><span style="letter-spacing:-.14px">siedzibę, </span><span style="letter-spacing:-.14px">stałe </span><span style="letter-spacing:0px">miejsce </span><span style="letter-spacing:-.08px">zamieszkania </span><span style="letter-spacing:-.3px">lub </span><span style="letter-spacing:0px">miejsce </span><span style="letter-spacing:-.32px">pobytu </span><span style="letter-spacing:-.29px">na </span><span style="letter-spacing:-.17px">terytorium </span><span style="letter-spacing:-.13px">państwa </span><span style="letter-spacing:-.15px">członkowskiego</span></span>
<span class="t " style="top:658.0px;font-size:15px;color:#848484;left:100.5px;"><span style="letter-spacing:-.2px">innym </span><span style="letter-spacing:-.09px">niż </span><span style="letter-spacing:-.17px">terytorium </span><span style="letter-spacing:-.3px">kraju</span></span>
<div style="left:82px;top:701px;width:960px;height:1px;background:#8a94a2;"></div>
<span class="t " style="top:713.0px;font-size:11px;color:#6a7480;left:94px;"><span style="letter-spacing:-.26px">Enter</span></span>
<span class="t " style="top:713.0px;font-size:11px;color:#6a7480;left:162.4px;"><span style="letter-spacing:-.15px">Ctrl+Y</span></span>
<span class="t " style="top:713.0px;font-size:11px;color:#6a7480;left:232.2px;"><span style="letter-spacing:-.41px">Ctrl+U</span></span>
<span class="t " style="top:715.0px;font-size:11px;color:#6a7480;left:972.2px;"><span style="letter-spacing:-.11px">Esc</span></span>
<div style="left:95px;top:725px;width:58px;height:20px;box-sizing:border-box;border:1px solid #d0d0d0;border-radius:4px;background:#fdfdfd;"></div>
<span class="t " style="top:729.75px;font-size:11px;color:#000;left:104px;"><span style="letter-spacing:.04px"><u>W</u>ybierz</span></span>
<div style="left:163px;top:725px;width:58px;height:20px;box-sizing:border-box;border:1px solid #d0d0d0;border-radius:4px;background:#fdfdfd;"></div>
<span class="t " style="top:729.75px;font-size:11px;color:#000;left:168.6px;"><span style="letter-spacing:.35px">Przywróć</span></span>
<div style="left:232px;top:725px;width:97px;height:20px;box-sizing:border-box;border:1px solid #d0d0d0;border-radius:4px;background:#fdfdfd;"></div>
<span class="t " style="top:729.75px;font-size:11px;color:#000;left:238.3px;"><span style="letter-spacing:-.15px">Usuń </span><span style="letter-spacing:.03px">przypisanie</span></span>
<div style="left:973px;top:727px;width:58px;height:20px;box-sizing:border-box;border:1px solid #d0d0d0;border-radius:4px;background:#fdfdfd;"></div>
<span class="t " style="top:731.75px;font-size:11px;color:#000;left:984.2px;"><span style="letter-spacing:-.36px">Zamknij</span></span>
<svg width="1051" height="771" viewBox="0 0 1051 771" style="position:absolute;left:0;top:0;pointer-events:none">
<path d="M385.5 166.5L958 201.5" stroke="#e21414" stroke-width="1.9" fill="none"/>
<path d="M967.5 202.5L957 197L957.5 207.5Z" fill="#e21414"/>
<path d="M976 212.5L327 271" stroke="#e21414" stroke-width="1.9" fill="none"/>
<path d="M317 271.8L327.6 266.2L328.4 275.8Z" fill="#e21414"/>
</svg>
</body></html>
